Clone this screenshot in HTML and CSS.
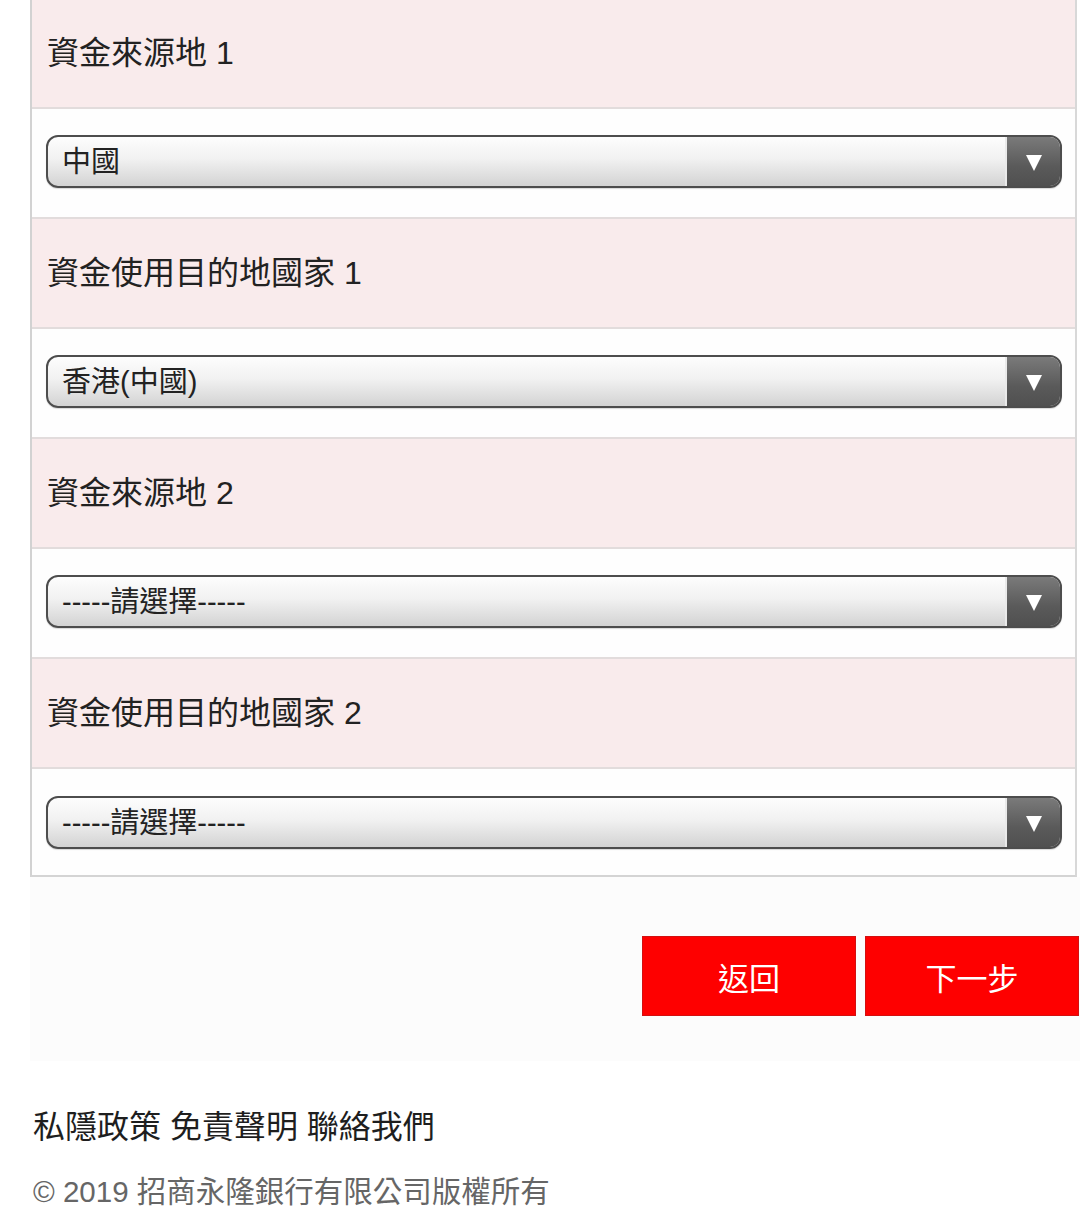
FILE: index.html
```html
<!DOCTYPE html>
<html lang="zh-Hant">
<head>
<meta charset="utf-8">
<title>資金來源</title>
<link rel="stylesheet" href="styles.css">
</head>
<body>
<div class="panel">
  <div class="label-row">資金來源地 1</div>
  <div class="select-row">
    <div class="select"><span class="select-text">中國</span><span class="select-arrow"><span class="tri"></span></span></div>
  </div>
  <div class="label-row">資金使用目的地國家 1</div>
  <div class="select-row">
    <div class="select"><span class="select-text">香港(中國)</span><span class="select-arrow"><span class="tri"></span></span></div>
  </div>
  <div class="label-row">資金來源地 2</div>
  <div class="select-row">
    <div class="select"><span class="select-text">-----請選擇-----</span><span class="select-arrow"><span class="tri"></span></span></div>
  </div>
  <div class="label-row">資金使用目的地國家 2</div>
  <div class="select-row last">
    <div class="select"><span class="select-text">-----請選擇-----</span><span class="select-arrow"><span class="tri"></span></span></div>
  </div>
</div>
<div class="actions">
  <button class="btn">返回</button>
  <button class="btn">下一步</button>
</div>
<div class="footer">
  <div class="links">私隱政策 免責聲明 聯絡我們</div>
  <div class="copy">© 2019 招商永隆銀行有限公司版權所有</div>
</div>
</body>
</html>
```
FILE: styles.css
```css
html, body {
  margin: 0;
  padding: 0;
  background: #ffffff;
}
body {
  font-family: "Liberation Sans", "Noto Sans CJK TC", sans-serif;
  color: #222;
  width: 1080px;
  overflow: hidden;
}
.panel {
  margin-left: 30px;
  margin-top: -1px;
  width: 1043px;
  border-left: 2px solid #d2d2d2;
  border-right: 2px solid #d8d8d8;
  border-bottom: 2px solid #d4d4d4;
}
.label-row {
  height: 110px;
  box-sizing: border-box;
  background: #f9ebec;
  border-bottom: 2px solid #e2dcdc;
  display: flex;
  align-items: center;
  padding-left: 15px;
  padding-bottom: 7px;
  font-size: 32px;
  color: #222;
}
.select-row {
  height: 110px;
  box-sizing: border-box;
  background: #fefefe;
  border-bottom: 2px solid #e2dcdc;
  display: flex;
  align-items: center;
  padding: 0 13px 3px 14px;
}
.select-row.last {
  border-bottom: none;
  height: 106px;
  padding-bottom: 0;
}
.select {
  flex: 1;
  height: 53px;
  box-sizing: border-box;
  border: 2px solid #4d4d4d;
  border-radius: 12px;
  background: linear-gradient(#fdfdfd 0%, #f1f1f1 45%, #d3d3d3 100%);
  display: flex;
  align-items: center;
  overflow: hidden;
  box-shadow: 0 1px 1px rgba(0,0,0,0.15);
}
.select-text {
  flex: 1;
  padding-left: 14px;
  padding-top: 2px;
  font-size: 29px;
  color: #222;
  line-height: 1;
}
.select-arrow {
  width: 53px;
  align-self: stretch;
  background: linear-gradient(#7a7a7a, #5a5a5a 60%, #505050);
  border-left: 2px solid #eaeaea;
  display: flex;
  align-items: center;
  justify-content: center;
}
.tri {
  width: 0;
  height: 0;
  border-left: 8px solid transparent;
  border-right: 8px solid transparent;
  border-top: 16px solid #ffffff;
  margin-top: 3px;
}
.actions {
  margin-left: 30px;
  background: #fcfcfc;
  padding: 59px 1px 0 0;
  height: 184px;
  box-sizing: border-box;
  display: flex;
  justify-content: flex-end;
  align-items: flex-start;
  gap: 9px;
}
.btn {
  width: 214px;
  height: 80px;
  background: #fe0000;
  border: 1px solid #d21010;
  color: #ffffff;
  font-family: "Liberation Sans", "Noto Sans CJK TC", sans-serif;
  font-size: 31px;
  padding: 0;
  margin: 0;
}
.footer {
  padding-left: 33px;
  padding-top: 46px;
}
.links {
  font-size: 32px;
  color: #1e1e1e;
  line-height: 40px;
}
.copy {
  margin-top: 25px;
  font-size: 29.5px;
  color: #666;
  line-height: 40px;
}
```
